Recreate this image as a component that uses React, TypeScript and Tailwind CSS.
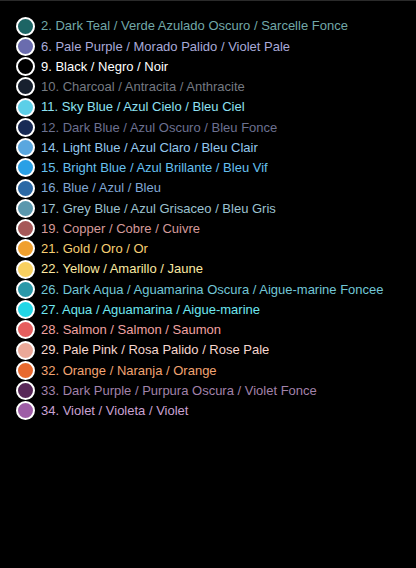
import React from 'react';

type Swatch = { label: string; fill: string; text: string };

const SWATCHES: Swatch[] = [
  { label: '2. Dark Teal / Verde Azulado Oscuro / Sarcelle Fonce', fill: '#1d6565', text: '#72a8a8' },
  { label: '6. Pale Purple / Morado Palido / Violet Pale', fill: '#6a6cae', text: '#a8aad8' },
  { label: '9. Black / Negro / Noir', fill: '#000000', text: '#ffffff' },
  { label: '10. Charcoal / Antracita / Anthracite', fill: '#17202e', text: '#757a82' },
  { label: '11. Sky Blue / Azul Cielo / Bleu Ciel', fill: '#5ccfe8', text: '#8ee0f2' },
  { label: '12. Dark Blue / Azul Oscuro / Bleu Fonce', fill: '#182a55', text: '#6c7190' },
  { label: '14. Light Blue / Azul Claro / Bleu Clair', fill: '#5aa7df', text: '#94c8ee' },
  { label: '15. Bright Blue / Azul Brillante / Bleu Vif', fill: '#29a0e6', text: '#66c0f0' },
  { label: '16. Blue / Azul / Bleu', fill: '#2b69a6', text: '#80a8d6' },
  { label: '17. Grey Blue / Azul Grisaceo / Bleu Gris', fill: '#5a98ae', text: '#9cc2d0' },
  { label: '19. Copper / Cobre / Cuivre', fill: '#a65858', text: '#d49a9a' },
  { label: '21. Gold / Oro / Or', fill: '#f0a02e', text: '#f6cf72' },
  { label: '22. Yellow / Amarillo / Jaune', fill: '#f8d060', text: '#fbe9a2' },
  { label: '26. Dark Aqua / Aguamarina Oscura / Aigue-marine Foncee', fill: '#2a98a8', text: '#72c6d6' },
  { label: '27. Aqua / Aguamarina / Aigue-marine', fill: '#22d6e6', text: '#6ee6f0' },
  { label: '28. Salmon / Salmon / Saumon', fill: '#e65e5e', text: '#f0a2a0' },
  { label: '29. Pale Pink / Rosa Palido / Rose Pale', fill: '#eaa898', text: '#f6d6ce' },
  { label: '32. Orange / Naranja / Orange', fill: '#e8692e', text: '#f2a472' },
  { label: '33. Dark Purple / Purpura Oscura / Violet Fonce', fill: '#582858', text: '#a282aa' },
  { label: '34. Violet / Violeta / Violet', fill: '#9e5ea6', text: '#caa2d2' },
];

export default function App() {
  return (
    <div className="w-[416px] h-[568px] bg-black border-t border-[#2a2a2a] overflow-hidden">
      <ul className="flex flex-col pt-[15px] pl-[16px] font-['Liberation_Sans',Arial,sans-serif] text-[13px]">
        {SWATCHES.map((s) => (
          <li key={s.label} className="flex items-center gap-[6px] h-[20.26px]">
            <span
              className="w-[19px] h-[19px] rounded-full border-2 border-white shrink-0"
              style={{ backgroundColor: s.fill }}
            />
            <span className="whitespace-nowrap" style={{ color: s.text }}>
              {s.label}
            </span>
          </li>
        ))}
      </ul>
    </div>
  );
}
